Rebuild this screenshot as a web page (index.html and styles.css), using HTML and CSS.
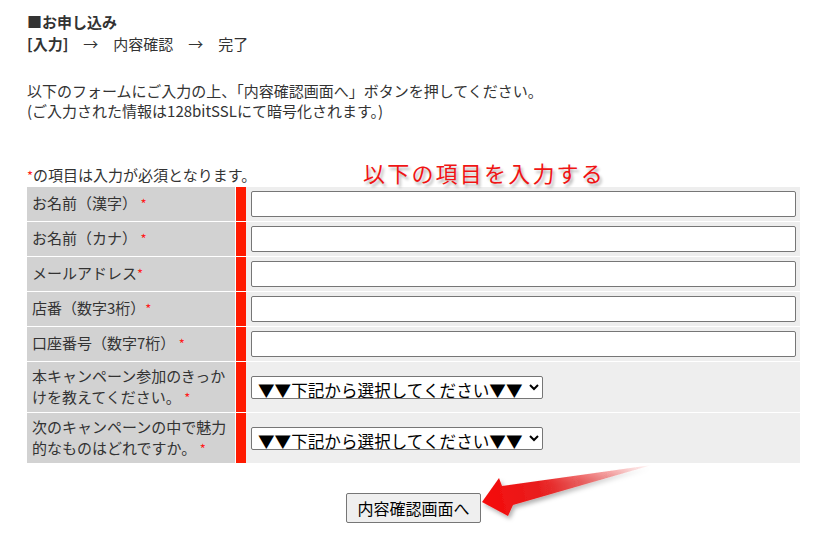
FILE: index.html
```html
<!DOCTYPE html>
<html lang="ja">
<head>
<meta charset="utf-8">
<title>お申し込み</title>
<link rel="stylesheet" href="styles.css">
</head>
<body>
<div class="page">
  <div class="head">
    <div class="title">■お申し込み</div>
    <div class="steps"><b>[入力]</b>　→　内容確認　→　完了</div>
  </div>
  <p class="intro">以下のフォームにご入力の上、「内容確認画面へ」ボタンを押してください。<br>(ご入力された情報は128bitSSLにて暗号化されます。)</p>
  <p class="note"><span class="req">*</span>の項目は入力が必須となります。</p>
  <table class="form">
    <tr><th>お名前（漢字） <span class="req">*</span></th><td><input type="text" class="txt"></td></tr>
    <tr><th>お名前（カナ） <span class="req">*</span></th><td><input type="text" class="txt"></td></tr>
    <tr><th>メールアドレス<span class="req">*</span></th><td><input type="text" class="txt"></td></tr>
    <tr><th>店番（数字3桁）<span class="req">*</span></th><td><input type="text" class="txt"></td></tr>
    <tr><th>口座番号（数字7桁） <span class="req">*</span></th><td><input type="text" class="txt"></td></tr>
    <tr><th>本キャンペーン参加のきっかけを教えてください。 <span class="req">*</span></th><td><select class="sel"><option>▼▼下記から選択してください▼▼</option></select></td></tr>
    <tr><th>次のキャンペーンの中で魅力的なものはどれですか。 <span class="req">*</span></th><td><select class="sel"><option>▼▼下記から選択してください▼▼</option></select></td></tr>
  </table>
  <div class="actions"><button type="button" class="btn">内容確認画面へ</button></div>
  <div class="annot">以下の項目を入力する</div>
  <svg class="arrow" width="200" height="70" viewBox="470 455 200 70">
    <defs>
      <linearGradient id="ag" x1="482" y1="500" x2="652" y2="465" gradientUnits="userSpaceOnUse">
        <stop offset="0" stop-color="#f50a0a"/>
        <stop offset="0.35" stop-color="#e82020"/>
        <stop offset="1" stop-color="#e82020" stop-opacity="0"/>
      </linearGradient>
      <filter id="sh" x="-20%" y="-40%" width="140%" height="180%">
        <feDropShadow dx="2" dy="3" stdDeviation="2" flood-color="#000" flood-opacity="0.3"/>
      </filter>
    </defs>
    <polygon points="482,502 499,478 502,486 652,465 513,505 508,516" fill="url(#ag)" filter="url(#sh)"/>
  </svg>
</div>
</body>
</html>
```

FILE: styles.css
```css
html, body {
  margin: 0;
  padding: 0;
  background: #fff;
}
body {
  font-family: "Noto Sans CJK JP", "Noto Sans", sans-serif;
  font-size: 15px;
  color: #333;
}
.page {
  position: relative;
  width: 836px;
  height: 550px;
  padding: 11px 0 0 27px;
  box-sizing: border-box;
}
.head {
  line-height: 22px;
}
.title {
  font-weight: bold;
}
.intro {
  margin: 26px 0 0;
  line-height: 20px;
}
.note {
  margin: 44px 0 0;
  line-height: 20px;
}
.req {
  color: #ff1a1a;
  font-size: 13px;
}
.form {
  margin-left: -1px;
  width: 775px;
  border-spacing: 1px;
  table-layout: fixed;
}
.form th {
  width: 198px;
  padding: 4px 5px;
  background: #d2d2d2;
  font-weight: normal;
  text-align: left;
  line-height: 20.5px;
  vertical-align: middle;
}
.form td {
  padding: 4px 4px 4px 5px;
  background: #eeeeee;
  border-left: 10px solid #ff1a00;
  vertical-align: middle;
  line-height: 20px;
}
.txt {
  display: block;
  width: 545px;
  height: 26px;
  box-sizing: border-box;
  margin: 0;
  border: 1px solid #767676;
  border-radius: 2px;
  background: #fff;
}
.sel {
  font-family: "Noto Sans CJK JP", sans-serif;
  font-size: 16.6px;
  height: 23px;
  margin: 0;
  padding: 0 2px;
  border: 1px solid #767676;
  border-radius: 2px;
  background: #fff;
  color: #000;
  vertical-align: middle;
}
.actions {
  width: 773px;
  margin-top: 29px;
  text-align: center;
}
.btn {
  font-family: "Noto Sans CJK JP", sans-serif;
  font-size: 16px;
  height: 30px;
  padding: 0 10px;
  border: 1px solid #767676;
  border-radius: 2px;
  background: #efefef;
  color: #000;
}
.annot {
  position: absolute;
  left: 363px;
  top: 157px;
  font-size: 22px;
  line-height: 30px;
  letter-spacing: 2.2px;
  color: #f01414;
  text-shadow: 2px 3px 3px rgba(0, 0, 0, 0.3);
}
.arrow {
  position: absolute;
  left: 470px;
  top: 455px;
}
```
